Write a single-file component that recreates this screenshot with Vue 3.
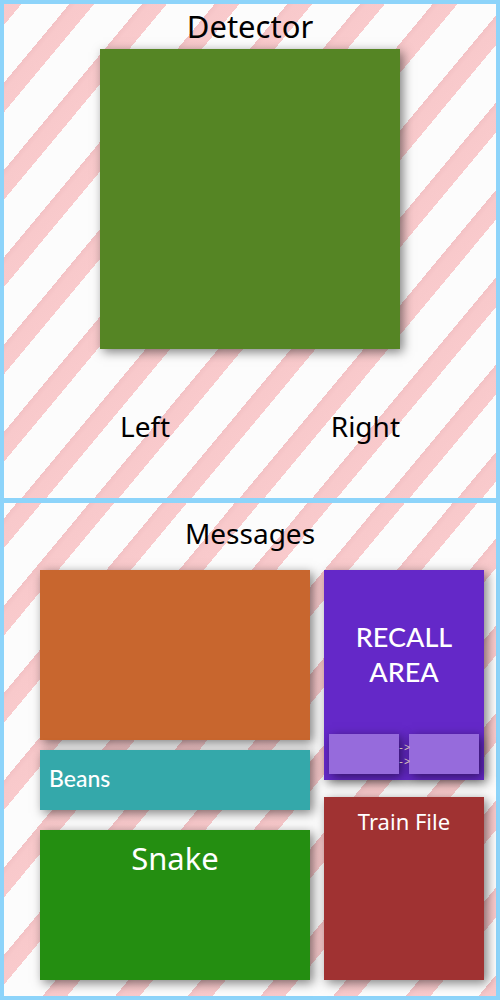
<script setup>
const arrows = ['->', '->']
</script>

<template>
  <main class="page">
    <section class="panel detector">
      <h1 class="title">Detector</h1>
      <div class="card screen"></div>
      <div class="sides">
        <span>Left</span>
        <span>Right</span>
      </div>
    </section>

    <section class="panel messages">
      <h2 class="heading">Messages</h2>
      <div class="board">
        <div class="column">
          <div class="card log"></div>
          <div class="card beans">Beans</div>
          <div class="card snake">Snake</div>
        </div>
        <div class="column side">
          <div class="card recall">
            <p class="recall-name">RECALL AREA</p>
            <div class="slots">
              <div class="card slot"></div>
              <div class="arrows">
                <span v-for="(arrow, i) in arrows" :key="i">{{ arrow }}</span>
              </div>
              <div class="card slot"></div>
            </div>
          </div>
          <div class="card train">Train File</div>
        </div>
      </div>
    </section>
  </main>
</template>

<style>
body {
  margin: 0;
}
</style>

<style scoped>
.page {
  box-sizing: border-box;
  min-height: 100vh;
  display: grid;
  grid-template-rows: 494fr 493fr;
  gap: 5px;
  padding: 4px;
  background: #8dd4fa;
  font-family: "Noto Sans", "Open Sans", sans-serif;
  color: #000;
}

.panel {
  box-sizing: border-box;
  background-color: #fcfcfc;
  background-image: repeating-linear-gradient(
    to bottom right,
    #f8c9cb 0%,
    #f9cacc 4%,
    #fcfcfc 4%,
    #fcfcfc 15%,
    #f3c2c5 15%,
    #f8c9cb 16.6667%
  );
  background-size: 218px 262px;
}

.detector {
  display: flex;
  flex-direction: column;
  align-items: center;
}

.messages {
  background-position: 20px 0;
  padding-bottom: 16px;
  display: flex;
  flex-direction: column;
}

.title {
  margin: 0;
  font-size: 31px;
  font-weight: 400;
  line-height: 45px;
}

.heading {
  margin: 0;
  font-size: 28px;
  font-weight: 400;
  line-height: 60px;
  padding-bottom: 7px;
  text-align: center;
}

.card {
  box-sizing: border-box;
  box-shadow: 3px 3px 10px rgba(0, 0, 0, 0.5);
}

.screen {
  width: 300px;
  height: 300px;
  background: #558524;
}

.sides {
  box-sizing: border-box;
  width: 300px;
  padding: 56px 0 0 20px;
  display: flex;
  justify-content: space-between;
  font-size: 28px;
  line-height: 42px;
}

.board {
  flex: 1;
  display: grid;
  grid-template-columns: 27fr 16fr;
  gap: 14px;
  padding: 0 12px 0 36px;
}

.column {
  display: flex;
  flex-direction: column;
  color: #fff;
}

.side {
  gap: 17px;
}

.log {
  height: 170px;
  background: #c8662e;
}

.beans {
  height: 60px;
  margin: 10px 0 20px;
  padding-left: 9px;
  background: #34a8aa;
  font-family: "Trebuchet MS", Lato, sans-serif;
  font-size: 23px;
  font-weight: 500;
  line-height: 56px;
}

.snake {
  flex: 1;
  background: #248e11;
  font-size: 31px;
  line-height: 56px;
  text-align: center;
}

.recall {
  height: 210px;
  padding: 49px 5px 6px;
  display: flex;
  flex-direction: column;
  justify-content: space-between;
  background: #6428c8;
}

.recall-name {
  margin: 0 25px;
  font-family: "Trebuchet MS", Lato, sans-serif;
  font-size: 27px;
  font-weight: 500;
  line-height: 35px;
  text-align: center;
}

.slots {
  display: flex;
}

.slot {
  flex: 1;
  height: 40px;
  background: #966bdc;
}

.arrows {
  width: 10px;
  padding-top: 8px;
  display: flex;
  flex-direction: column;
  align-items: center;
  font-family: "Liberation Mono", monospace;
  font-size: 10px;
  line-height: 14px;
  white-space: nowrap;
  color: #d5c2b8;
  z-index: 1;
}

.train {
  flex: 1;
  background: #a03232;
  font-size: 22px;
  line-height: 48px;
  text-align: center;
}
</style>
